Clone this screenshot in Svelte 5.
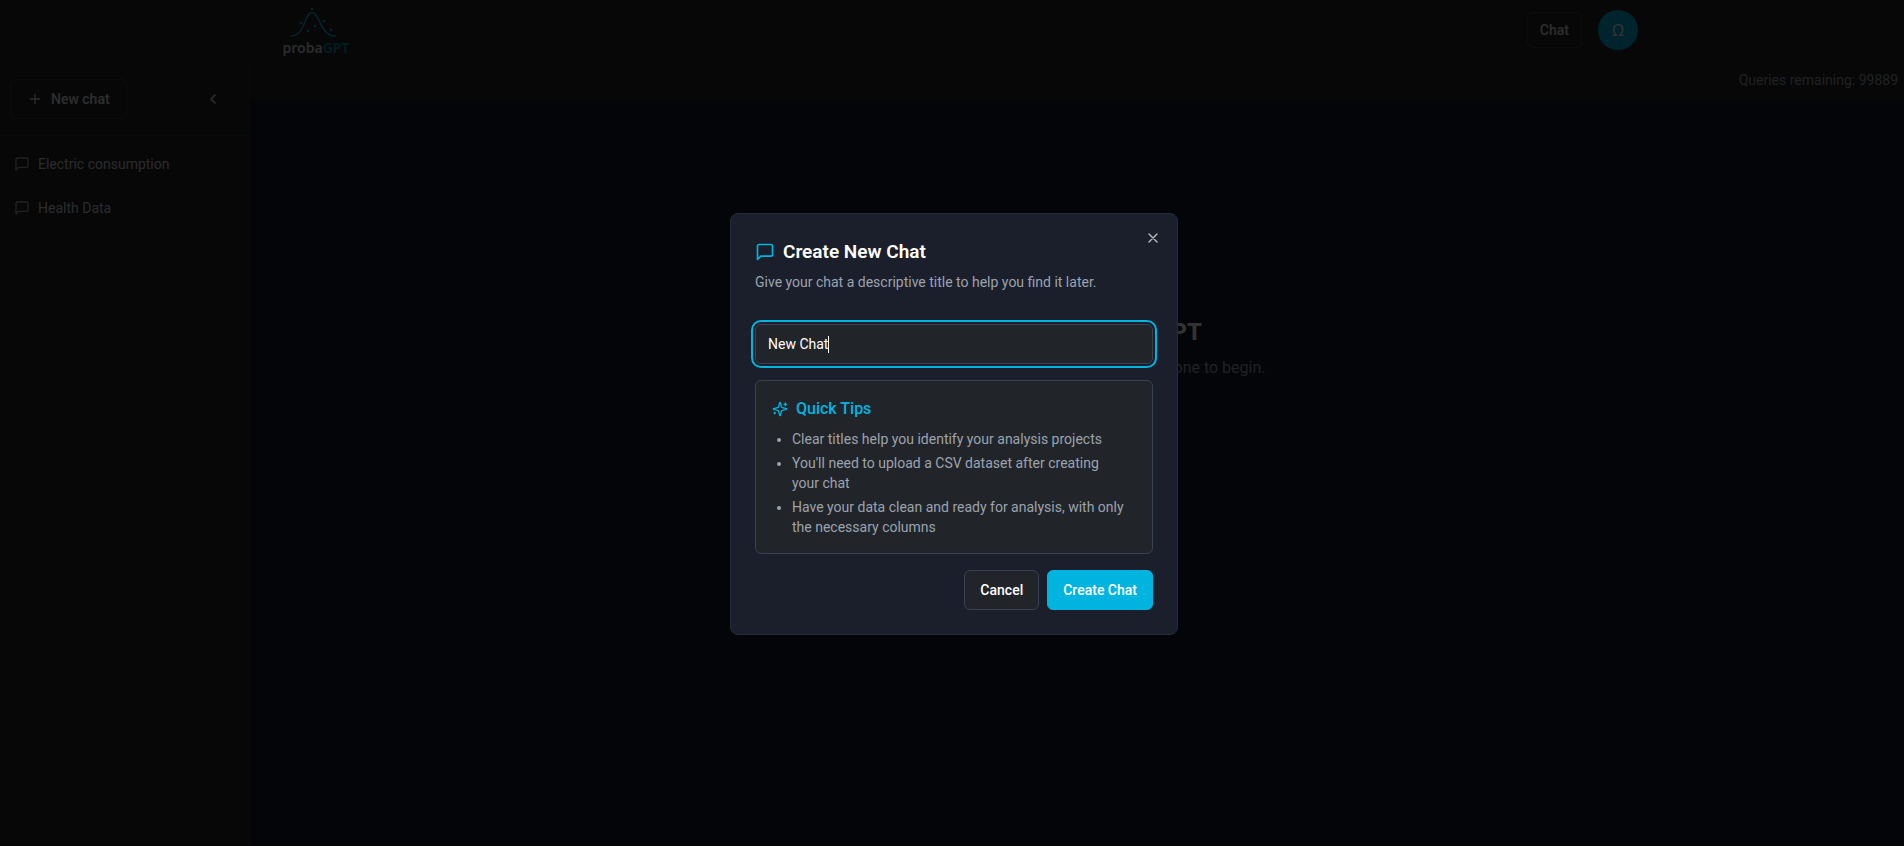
<script>
  import { onMount } from 'svelte';

  let chats = $state(['Electric consumption', 'Health Data']);
  let title = $state('New Chat');
  let queries = $state(99889);
  let focused = $state(false);
  let titleInput;

  const tips = [
    'Clear titles help you identify your analysis projects',
    "You'll need to upload a CSV dataset after creating your chat",
    'Have your data clean and ready for analysis, with only the necessary columns'
  ];

  const bubble = 'M21 15a2 2 0 0 1-2 2H7l-4 4V5a2 2 0 0 1 2-2h14a2 2 0 0 1 2 2z';

  // specks scattered around the bell curve of the logo
  const specks = [[46, 9], [35, 23], [58, 21], [49, 26], [42, 31], [65, 30]];

  const ruler = document.createElement('canvas').getContext('2d');
  ruler.font = '14px Roboto';
  let caret = $derived(Math.round(ruler.measureText(title).width));

  onMount(() => {
    titleInput.focus();
    titleInput.setSelectionRange(title.length, title.length);
  });

  function createChat(e) {
    e.preventDefault();
    if (title.trim()) {
      chats = [...chats, title];
      title = '';
    }
  }
</script>

<div class="page">
  <header>
    <div class="bar">
      <a href="/" aria-label="probaGPT">
        <svg class="logo" width="100" height="60" viewBox="0 0 100 60">
          <path d="M25.5 36C39 35.5 38.500 12.500 46 12.500S54 35.5 69 36" fill="none" stroke="#00b4e0" stroke-width="1.500" stroke-linecap="round" />
          {#each specks as [x, y]}
            <circle cx={x} cy={y} r="1.300" fill="#00b4e0" />
          {/each}
          <text x="50" y="53" text-anchor="middle">proba<tspan fill="#0093b8">GPT</tspan></text>
        </svg>
      </a>
      <nav>
        <a class="button nav-link" href="/chat">Chat</a>
        <button class="avatar" aria-label="Account">Ω</button>
      </nav>
    </div>
  </header>

  <div class="body">
    <aside>
      <div class="aside-head">
        <button class="button new-chat">
          <svg class="icon" viewBox="0 0 24 24"><path d="M5 12h14M12 5v14" /></svg>
          New chat
        </button>
        <button class="collapse" aria-label="Collapse sidebar">
          <svg class="icon" viewBox="0 0 24 24"><path d="m15 18-6-6 6-6" /></svg>
        </button>
      </div>
      <ul class="chats">
        {#each chats as chat}
          <li>
            <a href="/chat">
              <svg class="icon" viewBox="0 0 24 24"><path d={bubble} /></svg>
              {chat}
            </a>
          </li>
        {/each}
      </ul>
    </aside>

    <main>
      <div class="queries">Queries remaining: {queries}</div>
      <div class="empty">
        <h1>Welcome to probaGPT</h1>
        <p>Select an existing chat or create a new one to begin.</p>
      </div>
    </main>
  </div>
</div>

<div class="overlay">
  <div class="modal" role="dialog" aria-modal="true" aria-labelledby="modal-title">
    <button class="close" aria-label="Close">
      <svg class="icon" viewBox="0 0 24 24"><path d="M18 6 6 18M6 6l12 12" /></svg>
    </button>

    <div class="modal-head">
      <h2 id="modal-title">
        <svg class="icon large" viewBox="0 0 24 24"><path d={bubble} /></svg>
        Create New Chat
      </h2>
      <p>Give your chat a descriptive title to help you find it later.</p>
    </div>

    <form onsubmit={createChat}>
      <div class="field">
        <input
          type="text"
          aria-label="Chat title"
          bind:value={title}
          bind:this={titleInput}
          onfocus={() => (focused = true)}
          onblur={() => (focused = false)}
        />
        {#if focused}
          <span class="caret" style="left: {13 + caret}px"></span>
        {/if}
      </div>

      <section class="tips">
        <h3>
          <svg class="icon" viewBox="0 0 24 24">
            <path d="M9.937 15.500A2 2 0 0 0 8.500 14.063l-6.135-1.582a.5.5 0 0 1 0-.962L8.500 9.936A2 2 0 0 0 9.937 8.500l1.582-6.135a.5.5 0 0 1 .963 0L14.063 8.500A2 2 0 0 0 15.500 9.937l6.135 1.581a.5.5 0 0 1 0 .964L15.500 14.063a2 2 0 0 0-1.437 1.437l-1.582 6.135a.5.5 0 0 1-.963 0z" />
            <path d="M20 3v4M22 5h-4M4 17v2M5 18H3" />
          </svg>
          Quick Tips
        </h3>
        <ul>
          {#each tips as tip}
            <li>{tip}</li>
          {/each}
        </ul>
      </section>

      <div class="actions">
        <button class="button" type="button">Cancel</button>
        <button class="button primary" type="submit">Create Chat</button>
      </div>
    </form>
  </div>
</div>

<style>
  :global(body) {
    margin: 0;
    background: #151b2c;
    color: #fff;
    font: 14px/20px Roboto, "Noto Sans", sans-serif;
  }

  * {
    box-sizing: border-box;
  }

  h1, h2, h3, p, ul {
    margin: 0;
    padding: 0;
  }

  a {
    color: inherit;
    text-decoration: none;
  }

  button, input {
    font: inherit;
    color: inherit;
  }

  button {
    padding: 0;
    border: 0;
    background: none;
    cursor: pointer;
  }

  .icon {
    width: 16px;
    height: 16px;
    flex: none;
    fill: none;
    stroke: currentColor;
    stroke-width: 2;
    stroke-linecap: round;
    stroke-linejoin: round;
  }

  .icon.large {
    width: 20px;
    height: 20px;
  }

  .button {
    display: flex;
    align-items: center;
    gap: 8px;
    height: 40px;
    padding: 0 15px;
    border: 1px solid #374151;
    border-radius: 6px;
    background: #212529;
    font-weight: 500;
  }

  .button.primary {
    border-color: #00b4e0;
    background: #00b4e0;
  }

  .page {
    display: flex;
    flex-direction: column;
    min-height: 100vh;
  }

  .page .button {
    border-color: #3a3f44;
    background: #262626;
    color: #e0e0e0;
  }

  header {
    background: #262626;
  }

  .bar {
    display: flex;
    align-items: center;
    justify-content: space-between;
    max-width: 1372px;
    height: 60px;
    margin: 0 auto;
  }

  .logo {
    display: block;
  }

  .logo text {
    font: 600 14px "Noto Sans", sans-serif;
    fill: #d1d5db;
  }

  nav {
    display: flex;
    align-items: center;
    gap: 16px;
  }

  .nav-link {
    height: 36px;
    padding: 0 12px;
  }

  .page .new-chat {
    padding: 0 16px;
  }

  .avatar {
    width: 40px;
    height: 40px;
    border-radius: 50%;
    background: #00b4e0;
    color: #fff;
    font-family: "Noto Sans", sans-serif;
    font-size: 16px;
  }

  .body {
    flex: 1;
    display: flex;
  }

  aside {
    width: 250px;
    border-right: 1px solid #2d3338;
    background: #262626;
  }

  .aside-head {
    display: flex;
    align-items: center;
    justify-content: space-between;
    padding: 19px 16px 16px 10px;
    border-bottom: 1px solid #2d3338;
  }

  .collapse {
    display: grid;
    place-items: center;
    width: 40px;
    height: 40px;
  }

  .chats {
    display: flex;
    flex-direction: column;
    gap: 4px;
    padding: 8px;
    list-style: none;
    color: #d1d5db;
  }

  .chats a {
    display: flex;
    align-items: center;
    gap: 8px;
    height: 40px;
    padding: 0 6px;
  }

  .chats .icon {
    color: #9ca3af;
  }

  main {
    flex: 1;
  }

  .queries {
    padding: 10px 6px;
    background: #262626;
    color: #9ca3af;
    text-align: right;
  }

  .empty {
    padding: 216px 0 0 8px;
    text-align: center;
  }

  h1 {
    font-size: 24px;
    line-height: 32px;
  }

  .empty p {
    margin-top: 8px;
    color: #9ca3af;
    font-size: 16px;
    line-height: 24px;
  }

  .overlay {
    position: fixed;
    inset: 0;
    display: grid;
    place-items: center;
    padding: 2px 0 0 4px;
    background: rgb(0 0 0 / 80%);
  }

  .modal {
    position: relative;
    width: 100%;
    max-width: 448px;
    padding: 24px;
    border: 1px solid #232d3a;
    border-radius: 8px;
    background: #1a1f2b;
  }

  .close {
    position: absolute;
    top: 16px;
    right: 16px;
    display: flex;
    color: #bcbec2;
  }

  h2 {
    display: flex;
    align-items: center;
    gap: 8px;
    font-size: 19px;
    font-weight: 600;
    line-height: 28px;
  }

  h2 .icon {
    color: #00b4e0;
  }

  .modal-head p {
    margin-top: 6px;
    color: #9ca3af;
  }

  form {
    display: flex;
    flex-direction: column;
    gap: 16px;
    margin-top: 32px;
  }

  .field {
    position: relative;
    display: flex;
  }

  input {
    width: 100%;
    height: 40px;
    padding: 0 12px;
    border: 1px solid #374151;
    border-radius: 6px;
    background: #212529;
    caret-color: transparent;
  }

  input:focus {
    outline: 2px solid #00b4e0;
    outline-offset: 2px;
  }

  .caret {
    position: absolute;
    top: 12px;
    width: 1px;
    height: 17px;
    background: #fff;
  }

  .tips {
    padding: 16px;
    border: 1px solid #374151;
    border-radius: 6px;
    background: #212529;
  }

  h3 {
    display: flex;
    align-items: center;
    gap: 8px;
    margin-bottom: 8px;
    color: #00b4e0;
    font-size: 16px;
    font-weight: 500;
    line-height: 24px;
  }

  .tips ul {
    display: flex;
    flex-direction: column;
    gap: 4px;
    padding: 0 10px 0 20px;
    color: #9ca3af;
  }

  .actions {
    display: flex;
    justify-content: flex-end;
    gap: 8px;
  }
</style>
